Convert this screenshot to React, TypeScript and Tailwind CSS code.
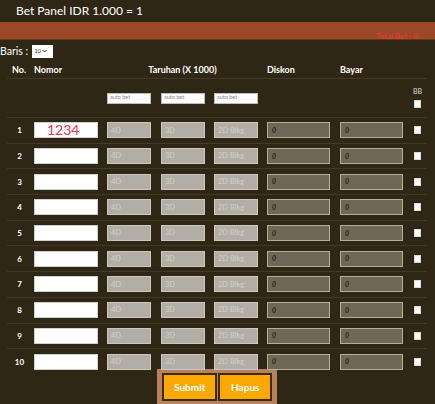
import React from "react";

const rows = [1, 2, 3, 4, 5, 6, 7, 8, 9, 10];

function Check() {
  return <div className="w-[7px] h-[8px] bg-white border border-[#d8d8d8]" />;
}

export default function App() {
  return (
    <div
      className="w-[435px] h-[404px] overflow-hidden bg-[#2f2716] text-white"
      style={{ fontFamily: "Lato, 'Open Sans', sans-serif" }}
    >
      {/* title */}
      <div className="h-[22px] flex items-center pl-[16px] text-[12px] leading-none">
        Bet Panel IDR 1.000 = 1
      </div>
      {/* band */}
      <div className="h-[17px] bg-[#9a4827] flex items-end justify-end pr-[17px]">
        <span className="text-[8px] leading-none text-[#f03a36] translate-y-[1px]">Total Bet : 0</span>
      </div>
      <div className="h-[1px] bg-[#5c3a1f]" />
      {/* baris */}
      <div className="h-[18px] flex items-center mt-[2px]">
        <span className="text-[10.5px] leading-none">Baris :</span>
        <div className="ml-[4px] w-[21px] h-[13px] bg-white flex items-center pl-[2px] gap-[1px] text-[#333]">
          <span className="text-[6px] leading-none">10</span>
          <svg width="5" height="4" viewBox="0 0 5 4">
            <path d="M0.5 1 L2.5 3 L4.5 1" stroke="#333" strokeWidth="1" fill="none" />
          </svg>
        </div>
      </div>
      {/* table header */}
      <div className="h-[18px] flex items-center text-[9px] font-bold leading-none pl-[4px]">
        <div className="w-[30px] text-center">No.</div>
        <div className="w-[73px]">Nomor</div>
        <div className="w-[151px] text-center">Taruhan (X 1000)</div>
        <div className="w-[9px]" />
        <div className="w-[73px]">Diskon</div>
        <div className="w-[63px]">Bayar</div>
      </div>
      {/* autobet row */}
      <div className="ml-[7px] w-[420px] border-t border-[#433a26] h-[39px] flex items-center">
        <div className="w-[100px]" />
        <div className="w-[44px] h-[11px] bg-white border border-[#bdbdbd] text-[5.5px] text-[#888] leading-none flex items-center pl-[2px]">auto bet</div>
        <div className="w-[10px]" />
        <div className="w-[44px] h-[11px] bg-white border border-[#bdbdbd] text-[5.5px] text-[#888] leading-none flex items-center pl-[2px]">auto bet</div>
        <div className="w-[9px]" />
        <div className="w-[44px] h-[11px] bg-white border border-[#bdbdbd] text-[5.5px] text-[#888] leading-none flex items-center pl-[2px]">auto bet</div>
        <div className="w-[155px]" />
        <div className="flex flex-col items-center gap-[5px] -mt-[1px]">
          <span className="text-[7px] leading-none text-[#ddd]">BB</span>
          <Check />
        </div>
      </div>
      {/* rows */}
      {rows.map((n) => (
        <div key={n} className="ml-[7px] w-[420px] border-t border-[#433a26] h-[25.7px] flex items-center">
          <div className="w-[29px] -ml-[2px] text-center text-[8px] font-bold leading-none">{n}</div>
          <div className="w-[64px] h-[16px] bg-white border border-[#d0d0d0] flex items-center pl-[12px]">
            {n === 1 && <span className="text-[14px] leading-none text-[#e5394b]">1234</span>}
          </div>
          <div className="w-[9px]" />
          <div className="w-[44px] h-[16px] bg-[#b3aea5] border border-[#cbc7bf] flex items-center pl-[3px] text-[7.5px] text-[#d3cfc7] leading-none">4D</div>
          <div className="w-[10px]" />
          <div className="w-[44px] h-[16px] bg-[#b3aea5] border border-[#cbc7bf] flex items-center pl-[3px] text-[7.5px] text-[#d3cfc7] leading-none">3D</div>
          <div className="w-[9px]" />
          <div className="w-[44px] h-[16px] bg-[#b3aea5] border border-[#cbc7bf] flex items-center pl-[3px] text-[7.5px] text-[#d3cfc7] leading-none">2D Blkg</div>
          <div className="w-[9px]" />
          <div className="w-[63px] h-[16px] bg-[#6e6957] border border-[#b5ae96] flex items-center pl-[4px] text-[7px] font-bold italic text-[#2a2414] leading-none">0</div>
          <div className="w-[10px]" />
          <div className="w-[63px] h-[16px] bg-[#6e6957] border border-[#b5ae96] flex items-center pl-[4px] text-[7px] font-bold italic text-[#2a2414] leading-none">0</div>
          <div className="w-[11px]" />
          <Check />
        </div>
      ))}
      {/* buttons */}
      <div className="-mt-[5px] ml-[157px] w-[120px] h-[36px] bg-[#b9805e] pt-[4px] px-[5px] flex gap-[1px]">
        <button className="w-[56px] h-[28px] bg-[#fca800] border-2 border-[#3a2a12] text-white text-[10px] font-bold leading-none">Submit</button>
        <button className="w-[54px] h-[28px] bg-[#fca800] border-2 border-[#3a2a12] text-white text-[10px] font-bold leading-none">Hapus</button>
      </div>
    </div>
  );
}
